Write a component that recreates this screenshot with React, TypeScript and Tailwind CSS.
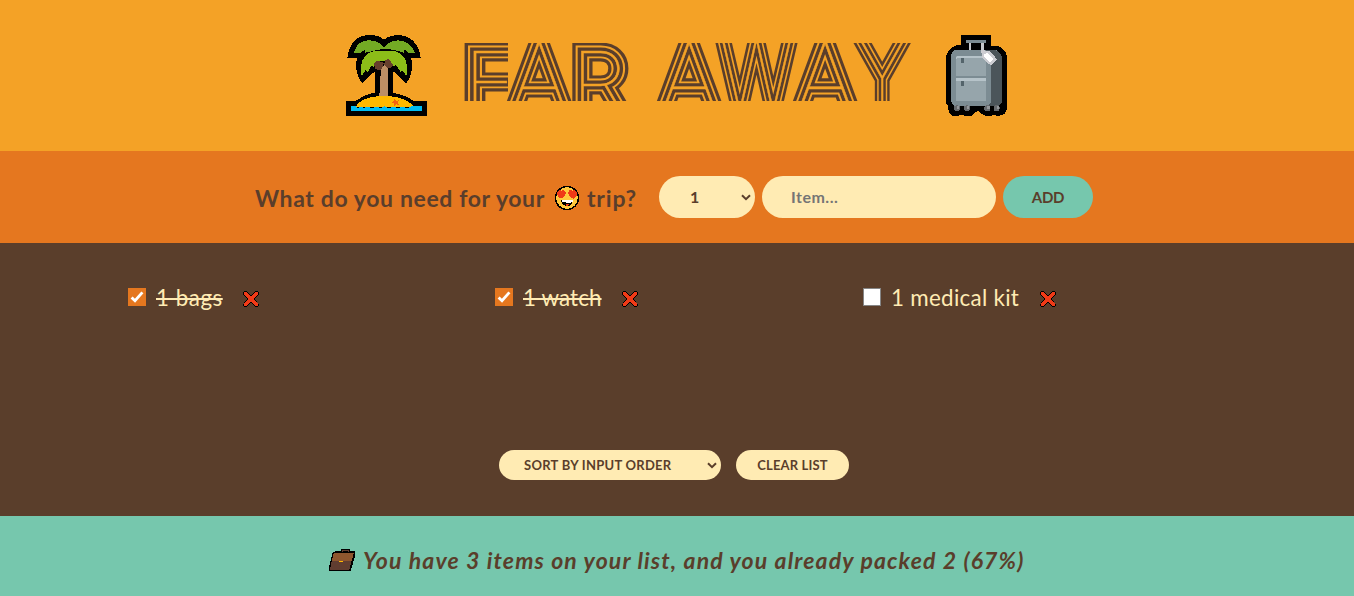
import React from "react";

type Glyph = {
  ch: string;
  x: number;
  y: number;
  size: number;
  sx: number;
};

const glyphs: Glyph[] = [
  { ch: "F", x: 17.7, y: 82, size: 84, sx: 1.1 },
  { ch: "A", x: 84.2, y: 82, size: 96, sx: 0.99 },
  { ch: "R", x: 125.3, y: 82, size: 84, sx: 1.07 },
  { ch: "A", x: 234.2, y: 82, size: 96, sx: 0.99 },
  { ch: "W", x: 301.5, y: 80, size: 96, sx: 0.83 },
  { ch: "A", x: 370.2, y: 82, size: 96, sx: 0.99 },
  { ch: "Y", x: 427.2, y: 82, size: 98, sx: 0.77 },
];

// Nested strokes around a hairline letter give four parallel stripes.
const layers: { w: number; c: string }[] = [
  { w: 17, c: "#5a3e2b" },
  { w: 10.8, c: "#f4a226" },
  { w: 7, c: "#5a3e2b" },
  { w: 0.5, c: "#f4a226" },
];

function Title() {
  return (
    <h1 className="ml-[10px] mt-[5px] h-[85px] w-[465px] shrink-0" aria-label="FAR AWAY">
      <svg width="465" height="85" viewBox="0 0 465 85" className="block overflow-visible">
        {glyphs.map((g, i) => (
          <g key={i}>
            {layers.map((l) => (
              <text
                key={l.w}
                transform={`translate(${g.x} ${g.y}) scale(${g.sx} 1)`}
                fontFamily="Inter, sans-serif"
                fontWeight="100"
                fontSize={g.size}
                textAnchor={g.ch === "F" || g.ch === "R" ? "start" : "middle"}
                dx={g.ch === "F" || g.ch === "R" ? -g.size * 0.1 : 0}
                fill={l.c}
                stroke={l.c}
                strokeWidth={l.w}
                strokeLinejoin="miter"
              >
                {g.ch}
              </text>
            ))}
            {g.ch === "F" && <rect x="53" y="0" width="30" height="85" fill="#f4a226" />}
          </g>
        ))}
        <rect x="0" y="-30" width="465" height="43" fill="#f4a226" />
        <rect x="0" y="71" width="465" height="48" fill="#f4a226" />
      </svg>
    </h1>
  );
}

function Palm() {
  return (
    <svg width="110" height="100" viewBox="0 0 330 300" shapeRendering="crispEdges" className="shrink-0">
      <path d="M33 228H62Q92 207 121 203V142L114 143L82 176Q63 150 63 118L66 98H37Q46 31 105 30Q133 31 147 44Q162 31 190 30Q248 34 257 98H229L231 130Q229 155 213 176L184 146L173 138V203Q213 210 235 228H276V273H33Z" fill="#000" />
      <path d="M57 83Q66 46 106 46Q132 48 147 66Q163 47 190 46Q229 49 239 83H218L209 73L207 83L190 78Q146 65 104 81L91 83L88 75L78 83Z" fill="#73aa24" />
      <path d="M80 153Q77 140 78 122Q84 87 111 80Q147 74 186 80Q214 92 216 125Q217 140 214 153L201 135L198 143L182 119L174 125L164 108H127L116 125L110 121L98 141L92 135Z" fill="#8cbd18" />
      <path d="M138 128L150 119L158 127V215H133Z" fill="#bd8f65" />
      <path d="M118 115Q122 106 133 108L146 114L141 132L130 136L119 129Z M149 106L160 102L175 119L169 128L157 129L148 120Z" fill="#67402d" />
      <path d="M62 246Q80 214 147 213Q210 213 239 247Z" fill="#ffb900" />
      <path d="M48 243H60L68 250L76 245L88 249L99 244L111 250L124 245L137 250L149 244L162 250L176 245L189 250L203 245L216 250L230 243H261V258H48Z" fill="#00bcf2" />
      <path d="M179 220L184 228L191 226L188 233L192 240L183 238L177 243L176 235L170 231L177 229Z" fill="#f7630c" />
    </svg>
  );
}

function Suitcase() {
  return (
    <svg width="85" height="100" viewBox="0 0 255 300" shapeRendering="crispEdges" className="ml-[15px] shrink-0">
      <path d="M78 30H168V62H187Q207 67 216 92V252L209 267L192 273L176 270L166 273H151L137 264L128 257L119 264L108 273H90L80 269L67 273H52L42 264L39 243L33 237V95Q39 69 65 61H78Z" fill="#000" />
      <path d="M60 75H182Q196 80 201 98V230Q198 241 187 243H60Q48 236 48 225V95Q50 81 60 75Z" fill="#7c8c93" />
      <path d="M151 75H181Q198 81 201 98V230Q198 241 187 243H157Q167 238 168 228V98Q165 82 151 75Z" fill="#4b555a" />
      <path d="M63 94H153V228H63Z" fill="#96a5ab" />
      <path d="M63 98L69 93H147L153 98H71L63 102ZM63 159H153V168H63Z" fill="#b6c3c9" />
      <path d="M63 153H153V159H63ZM153 98H159V228H153Z" fill="#7c8c93" />
      <path d="M78 98H87V114H78ZM78 168H87V183H78Z" fill="#54646b" />
      <path d="M93 45H153V54H93Z" fill="#7c8c93" />
      <path d="M102 54H108V75H102ZM138 54H147V78H138Z" fill="#c6c8cc" />
      <path d="M138 75L164 78L186 103L167 121L143 101Z" fill="#cccdd2" />
      <path d="M147 88L158 83L176 103L166 112L148 96Z" fill="#fff" />
      {[66, 96, 157, 185].map((x) => (
        <g key={x}>
          <circle cx={x} cy="250" r="9" fill="#66696c" />
          <path d={`M${x} 243h7v9h-7z`} fill="#94979a" />
        </g>
      ))}
    </svg>
  );
}

function HeartEyes() {
  return (
    <svg width="26" height="26" viewBox="0 0 78 78" shapeRendering="crispEdges" className="mt-[2px] shrink-0">
      <circle cx="39" cy="39" r="36.5" fill="#000" />
      <circle cx="39" cy="39" r="32" fill="#ffc83d" />
      <path d="M9 22Q13 13 23 17Q30 12 35 21Q38 31 21 41Q8 35 9 22ZM43 21Q47 12 55 17Q65 13 69 22Q72 35 58 41Q41 34 43 21Z" fill="#f03a17" />
      <path d="M21 45H57Q56 63 39 63Q24 62 21 45Z" fill="#000" />
      <path d="M23 46H56V52Q39 54 25 51Z" fill="#fff" />
      <path d="M34 60Q39 55 47 60L39 63Z" fill="#f03a17" />
    </svg>
  );
}

function Cross() {
  return (
    <svg width="16" height="16" viewBox="0 0 48 48" shapeRendering="crispEdges" className="block">
      <path d="M7 7L41 42M41 7L7 42" stroke="#000" strokeWidth="14" strokeLinecap="round" />
      <path d="M7 7L41 41M41 7L7 41" stroke="#f03a17" strokeWidth="9" strokeLinecap="round" />
    </svg>
  );
}

function Briefcase() {
  return (
    <svg width="28" height="26" viewBox="0 0 84 78" shapeRendering="crispEdges" className="shrink-0">
      <path d="M15 14L37 12L40 5H67V13H82L81 27L68 73H3L2 62Z" fill="#000" />
      <path d="M18 17H78L70 43H11Z" fill="#8e562e" />
      <path d="M11 43H70L64 69H6Z" fill="#603d30" />
      <path d="M42 16V11H60V16" fill="none" stroke="#603d30" strokeWidth="3" />
      <path d="M34 42H46V46H34Z" fill="#ffb900" />
    </svg>
  );
}

function Chevron({ className }: { className: string }) {
  return (
    <svg width="10" height="7" viewBox="0 0 10 7" className={className}>
      <path d="M1 1.2L5 5.2L9 1.2" fill="none" stroke="#5a3e2b" strokeWidth="2" />
    </svg>
  );
}

function Item({ label, done, width, spacing }: { label: string; done: boolean; width: string; spacing: string }) {
  const [checked, setChecked] = React.useState(done);
  return (
    <li className="flex h-[32px] items-center">
      <label className="grid h-[18px] w-[18px] shrink-0 place-items-center">
        <input
          type="checkbox"
          checked={checked}
          onChange={() => setChecked(!checked)}
          className="col-start-1 row-start-1 m-0 h-[18px] w-[18px] appearance-none border border-[#858585] bg-white checked:border-[#e5771f] checked:bg-[#e5771f]"
        />
        {checked && (
          <svg width="18" height="18" viewBox="0 0 18 18" className="pointer-events-none col-start-1 row-start-1">
            <path d="M3.6 9.4L7 12.8L14.4 4.4" fill="none" stroke="#fff" strokeWidth="2.8" />
          </svg>
        )}
      </label>
      <span
        className={`ml-[10px] mt-px whitespace-nowrap text-[22.4px] leading-[32px] ${width} ${spacing} ${checked ? "line-through" : ""}`}
      >
        {label}
      </span>
      <button className="ml-[20px] mt-[4px]" aria-label="Remove">
        <Cross />
      </button>
    </li>
  );
}

export default function App() {
  return (
    <div className="flex h-[596px] w-[1354px] flex-col overflow-hidden bg-[#5a3e2b] font-['Lato',sans-serif] text-[#5a3e2b]">
      <header className="flex h-[151px] shrink-0 items-start bg-[#f4a226] pl-[335px] pt-[25px]">
        <Palm />
        <Title />
        <Suitcase />
      </header>

      <form className="flex h-[92px] shrink-0 items-center bg-[#e5771f] pl-[255px]" onSubmit={(e) => e.preventDefault()}>
        <h3 className="flex w-[404px] shrink-0 items-center whitespace-nowrap text-[23px] font-bold leading-[34px]">
          <span className="mt-[2px] w-[299px] tracking-[0.62px]">What do you need for your</span>
          <HeartEyes />
          <span className="ml-[7px] mt-[2px] tracking-[0.8px]">trip?</span>
        </h3>
        <div className="relative flex items-center">
          <select className="h-[42px] w-[96px] appearance-none rounded-full bg-[#ffebb3] pl-[31px] text-[16px] font-bold">
            <option>1</option>
          </select>
          <Chevron className="absolute right-[4px] top-[18px]" />
        </div>
        <input
          placeholder="Item..."
          className="ml-[7px] h-[42px] w-[234px] rounded-full bg-[#ffebb3] px-[29px] pb-[2px] text-[16px] font-bold tracking-[0.5px] placeholder:text-[#757575]"
        />
        <button className="ml-[7px] h-[42px] w-[90px] rounded-full bg-[#76c7ad] text-[15px] font-bold leading-[42px] tracking-[-0.3px]">
          ADD
        </button>
      </form>

      <main className="flex h-[273px] shrink-0 flex-col justify-between pb-[36px] pt-[38px]">
        <ul className="grid grid-cols-[367px_368px_300px] pl-[128px] text-[#ffebb3]">
          <Item label="1 bags" done width="w-[67px]" spacing="tracking-[0.5px]" />
          <Item label="1 watch" done width="w-[79px]" spacing="tracking-[0.1px]" />
          <Item label="1 medical kit" done={false} width="w-[129px]" spacing="tracking-[0.28px]" />
        </ul>
        <div className="flex items-center pl-[499px]">
          <div className="relative flex">
            <select className="h-[30px] w-[222px] appearance-none rounded-full bg-[#ffebb3] pl-[25px] pt-px text-[13px] font-bold tracking-[0.27px]">
              <option>SORT BY INPUT ORDER</option>
            </select>
            <Chevron className="absolute right-[4px] top-[12px]" />
          </div>
          <button className="ml-[15px] h-[30px] w-[113px] rounded-full bg-[#ffebb3] text-[13px] font-bold leading-[30px] tracking-[0.15px]">
            CLEAR LIST
          </button>
        </div>
      </main>

      <footer className="flex h-[80px] shrink-0 items-center bg-[#76c7ad] pl-[328px] pt-[8px]">
        <Briefcase />
        <em className="ml-[7px] mt-px whitespace-nowrap text-[23px] font-bold tracking-[1.14px]">
          You have 3 items on your list, and you already packed 2 (67%)
        </em>
      </footer>
    </div>
  );
}
